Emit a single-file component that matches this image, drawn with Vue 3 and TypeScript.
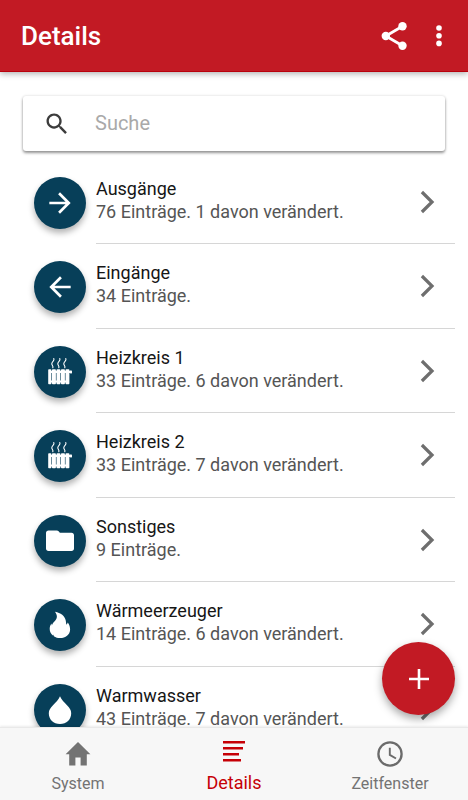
<script setup lang="ts">
import { ref, computed } from 'vue'

type IconName = 'right' | 'left' | 'radiator' | 'folder' | 'flame' | 'drop'

interface Group {
  title: string
  entries: number
  changed: number
  icon: IconName
}

const groups: Group[] = [
  { title: 'Ausgänge', entries: 76, changed: 1, icon: 'right' },
  { title: 'Eingänge', entries: 34, changed: 0, icon: 'left' },
  { title: 'Heizkreis 1', entries: 33, changed: 6, icon: 'radiator' },
  { title: 'Heizkreis 2', entries: 33, changed: 7, icon: 'radiator' },
  { title: 'Sonstiges', entries: 9, changed: 0, icon: 'folder' },
  { title: 'Wärmeerzeuger', entries: 14, changed: 6, icon: 'flame' },
  { title: 'Warmwasser', entries: 43, changed: 7, icon: 'drop' },
]

const query = ref('')
const visible = computed(() =>
  groups.filter((g) => g.title.toLowerCase().includes(query.value.toLowerCase())),
)

function summary(g: Group): string {
  const base = `${g.entries} Einträge.`
  return g.changed ? `${base} ${g.changed} davon verändert.` : base
}
</script>

<template>
  <div class="app">
    <header class="bar">
      <h1>Details</h1>
      <button class="bar-button" type="button" aria-label="Teilen">
        <svg width="34" height="34" viewBox="0 0 34 34">
          <path d="M25.500 7.300 8.800 17l16.700 9.700" fill="none" stroke="#fff" stroke-width="2.800" />
          <circle cx="25.500" cy="7.300" r="4.200" fill="#fff" />
          <circle cx="8.800" cy="17" r="4.200" fill="#fff" />
          <circle cx="25.500" cy="26.700" r="4.200" fill="#fff" />
        </svg>
      </button>
      <button class="bar-button" type="button" aria-label="Mehr">
        <svg width="32" height="32" viewBox="0 0 32 32" fill="#fff">
          <circle cx="16" cy="8" r="2.800" />
          <circle cx="16" cy="15.700" r="2.800" />
          <circle cx="16" cy="23.400" r="2.800" />
        </svg>
      </button>
    </header>

    <main class="content">
      <label class="search">
        <svg width="28" height="28" viewBox="0 0 24 24" fill="#3c3c3c" aria-hidden="true">
          <path d="M15.500 14h-.79l-.28-.27C15.410 12.590 16 11.110 16 9.500 16 5.910 13.090 3 9.500 3S3 5.910 3 9.500 5.910 16 9.500 16c1.610 0 3.090-.59 4.230-1.570l.27.28v.79l5 4.990L20.490 19l-4.990-5zm-6 0C7.010 14 5 11.990 5 9.500S7.010 5 9.500 5 14 7.010 14 9.500 11.990 14 9.500 14z" />
        </svg>
        <input v-model="query" type="text" placeholder="Suche" aria-label="Suche" />
      </label>

      <ul class="list">
        <li v-for="g in visible" :key="g.title">
          <a class="row" href="#">
            <span class="badge">
              <svg v-if="g.icon === 'right'" width="32" height="32" viewBox="0 0 24 24" fill="#fff">
                <path d="M12 4l-1.410 1.410L16.170 11H4v2h12.170l-5.580 5.590L12 20l8-8z" />
              </svg>
              <svg v-else-if="g.icon === 'left'" width="32" height="32" viewBox="0 0 24 24" fill="#fff">
                <path d="M20 11H7.830l5.590-5.590L12 4l-8 8 8 8 1.410-1.410L7.830 13H20v-2z" />
              </svg>
              <svg v-else-if="g.icon === 'radiator'" width="32" height="32" viewBox="0 0 32 32">
                <g fill="none" stroke="#fff" stroke-width="1.100" stroke-linecap="round">
                  <path d="M9.800 2.500c1.200 2.200-2 3-2 5.200 0 1.800 1.800 2.200 1 4.100" />
                  <path d="M15.800 2.500c1.200 2.200-2 3-2 5.200 0 1.800 1.800 2.200 1 4.100" />
                  <path d="M21.800 2.500c1.200 2.200-2 3-2 5.200 0 1.800 1.800 2.200 1 4.100" />
                </g>
                <g fill="#fff">
                  <rect x="4.200" y="13.300" width="3.200" height="14.900" rx=".8" />
                  <rect x="8" y="13.300" width="3.900" height="14.900" rx=".8" />
                  <rect x="12.500" y="13.300" width="3.900" height="14.900" rx=".8" />
                  <rect x="17" y="13.300" width="3.900" height="14.900" rx=".8" />
                  <rect x="21.500" y="13.300" width="3.900" height="14.900" rx=".8" />
                  <rect x="5" y="14.800" width="22" height="2.200" />
                  <rect x="5" y="24.500" width="19" height="2" />
                  <rect x="26" y="14.600" width="2" height="2.800" rx=".6" />
                </g>
              </svg>
              <svg v-else-if="g.icon === 'folder'" width="32" height="32" viewBox="0 0 32 32" fill="#fff">
                <path d="M4.500 5.500h8.300c.8 0 1.300.3 1.800.8l1.300 1.400h11.600c1.500 0 2.500 1 2.500 2.500v13.300c0 1.500-1 2.500-2.500 2.500h-23C3 26 2 25 2 23.500V8c0-1.500 1-2.500 2.500-2.500z" />
              </svg>
              <svg v-else-if="g.icon === 'flame'" width="32" height="32" viewBox="0 0 32 32" fill="#fff">
                <path d="M11 2.700c5.700 1.100 10 4 10.800 9 .3 1.600.3 2.800.5 4 .7-.6 1.200-1.300 1.500-2.300 1.600 2.300 2.400 4.700 2.300 7.300-.2 5-4.500 8.400-10 8.400-2.300 0-4.500-.6-6.200-1.900l-.7-1.700-.2 1c-2-1.500-3.300-3.800-3.300-6.500 0-2.200.6-4 1.800-5.600l.4 2.200c.5-2 1.600-3.100 3-4.600 2.400-2.600 2.900-5.500.1-9.300z" />
              </svg>
              <svg v-else width="32" height="32" viewBox="0 0 32 32" fill="#fff">
                <path d="M16 2.200c1.500 3.600 4.200 6 7 9 2.800 2.800 4.200 4.900 4.200 8C27.200 25.500 22.600 30 16 30S4.800 25.500 4.800 19.200c0-3.100 1.500-5.200 4.200-8 2.900-3 5.500-5.400 7-9z" />
              </svg>
            </span>
            <span class="text">
              <span class="title">{{ g.title }}</span>
              <span class="summary">{{ summary(g) }}</span>
            </span>
            <svg class="chevron" width="16" height="24" viewBox="0 0 16 24" fill="none" stroke="#6e6e6e" stroke-width="3.200" aria-hidden="true">
              <path d="M1.900 2 12 12 1.900 22" />
            </svg>
          </a>
        </li>
      </ul>
    </main>

    <nav class="tabs">
      <a class="tab" href="#">
        <svg width="30" height="30" viewBox="0 0 30 30" fill="#737373">
          <path d="M15 3 27.400 15.300h-3.600V26.500h-6.200v-8h-5.200v8H6.200V15.300H2.600z" />
        </svg>
        <span>System</span>
      </a>
      <a class="tab active" href="#" aria-current="page">
        <svg width="30" height="30" viewBox="0 0 30 30" fill="#c60006">
          <path d="M4 5h22v2.600H4zM4 11h20v2.600H4zM4 17h16v2.600H4zM4 23h18v2.600H4z" />
        </svg>
        <span>Details</span>
      </a>
      <a class="tab" href="#">
        <svg width="30" height="30" viewBox="0 0 30 30" fill="none" stroke="#6b6b6b">
          <circle cx="15" cy="15" r="11.600" stroke-width="2.300" />
          <path d="M14.800 8.700v7.200l6.200 3.600" stroke-width="1.900" />
        </svg>
        <span>Zeitfenster</span>
      </a>
    </nav>

    <button class="fab" type="button" aria-label="Hinzufügen">
      <svg width="34" height="34" viewBox="0 0 34 34" fill="none" stroke="#fff" stroke-width="2.600">
        <path d="M17 7v20M7 17h20" />
      </svg>
    </button>
  </div>
</template>

<style>
body {
  background: #fff;
}
</style>

<style scoped>
.app {
  position: relative;
  display: flex;
  flex-direction: column;
  height: 100vh;
  font-family: Roboto, 'Liberation Sans', sans-serif;
  color: #161616;
}

.app * {
  box-sizing: border-box;
}

svg {
  display: block;
  flex: none;
}

button {
  border: 0;
  padding: 0;
  background: none;
  cursor: pointer;
}

a {
  color: inherit;
  text-decoration: none;
}

.bar {
  flex: none;
  display: flex;
  align-items: center;
  gap: 12px;
  height: 72px;
  padding: 0 13px 0 21px;
  background: #c21a24;
  border-bottom: 1px solid #b9000c;
  box-shadow: 0 2px 6px rgba(0, 0, 0, 0.3);
  z-index: 1;
}

.bar h1 {
  flex: 1;
  margin: 0;
  font-size: 26px;
  line-height: 32px;
  font-weight: 500;
  color: #fff;
}

.content {
  flex: 1;
  min-height: 0;
  overflow: hidden;
  padding-top: 24px;
}

.search {
  display: flex;
  align-items: center;
  gap: 24px;
  height: 55px;
  margin: 0 23px 9px;
  padding: 0 20px;
  border-radius: 3px;
  background: #fff;
  box-shadow: 0 2px 3px rgba(0, 0, 0, 0.4), 0 0 3px rgba(0, 0, 0, 0.14);
}

.search input {
  flex: 1;
  min-width: 0;
  border: 0;
  padding: 0 0 2px;
  outline: 0;
  background: none;
  font: 20px/28px Roboto, 'Liberation Sans', sans-serif;
  color: #161616;
}

.search input::placeholder {
  color: #a9a9a9;
  opacity: 1;
}

.list {
  display: grid;
  grid-auto-rows: 84px 85px;
  margin: 0;
  padding: 0 13px 0 34px;
  list-style: none;
}

.row {
  position: relative;
  display: flex;
  gap: 10px;
  height: 100%;
}

.badge {
  flex: none;
  display: grid;
  place-items: center;
  width: 52px;
  height: 52px;
  margin-top: 17px;
  border-radius: 50%;
  background: #073f59;
  box-shadow: 0 4px 6px rgba(0, 0, 0, 0.3);
}

.text {
  flex: 1;
  display: flex;
  flex-direction: column;
  padding-top: 17px;
  border-bottom: 1px solid #d6d6d6;
  font-size: 18px;
  line-height: 23px;
}

.summary {
  color: #555;
}

.chevron {
  position: absolute;
  right: 19px;
  top: 30px;
}

.tabs {
  flex: none;
  display: grid;
  grid-template-columns: repeat(3, 1fr);
  height: 73px;
  background: #f7f7f7;
  border-top: 1px solid #e9e9e9;
  box-shadow: 0 -1px 2px rgba(0, 0, 0, 0.08);
  z-index: 1;
}

.tab {
  display: flex;
  flex-direction: column;
  align-items: center;
  gap: 3px;
  padding-top: 11px;
  font-size: 16px;
  line-height: 24px;
  color: #737373;
}

.tab.active {
  gap: 5px;
  padding-top: 8px;
  font-size: 18px;
  color: #c60006;
}

.fab {
  position: absolute;
  right: 13px;
  bottom: 85px;
  display: grid;
  place-items: center;
  width: 73px;
  height: 73px;
  border-radius: 50%;
  background: #c21a24;
  box-shadow: 0 4px 8px rgba(0, 0, 0, 0.35);
}
</style>
